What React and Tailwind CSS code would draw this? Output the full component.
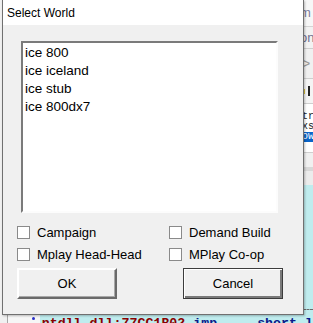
const worlds = ['ice 800', 'ice iceland', 'ice stub', 'ice 800dx7'];

const options = [
  ['Campaign', 'Demand Build'],
  ['Mplay Head-Head', 'MPlay Co-op'],
];

function Checkbox({ label }) {
  return (
    <label className="flex items-center gap-[7px] h-[13px]">
      <span className="w-[13px] h-[13px] bg-white border border-[#8a8a8a] shrink-0" />
      <span className="text-[13px] leading-none text-black">{label}</span>
    </label>
  );
}

function App() {
  return (
    <div className="relative w-[313px] h-[323px] overflow-hidden bg-[#f0f0f0] font-['Liberation_Sans',Arial,sans-serif]">
      {/* window behind the dialog */}
      <div className="flex flex-col h-full">
        <div className="flex flex-1">
          <div className="flex-1" />
          <div className="w-[10px] flex flex-col text-[13px] overflow-hidden whitespace-nowrap">
            <div className="h-[27px] bg-[#f7f7f7] border-b border-[#d4d4d4] flex items-center">
              <span className="-ml-[3px] text-[#7c7c9c]">m</span>
            </div>
            <div className="h-[22px] bg-[#f2f2f2] border-b border-[#cfcfcf] flex items-center">
              <span className="-ml-[3px] text-[#6f6f8f]">on</span>
            </div>
            <div className="h-[30px] bg-[#f0f0f0] border-b border-[#cfcfcf] flex items-center">
              <span className="-ml-[2px] text-[16px] text-[#9a9a9a]">&gt;</span>
            </div>
            <div className="h-[25px] bg-[#f4f4f4] border-b border-[#cfcfcf] flex items-center">
              <span className="w-[2px] h-[5px] bg-[#d8c040]" />
              <span className="ml-[3px] w-[2px] h-[10px] bg-[#222]" />
            </div>
            <div className="h-[49px] bg-white border-b border-[#cfcfcf] pt-[8px] font-['Liberation_Mono',monospace] text-[10px] leading-[10px] text-[#222]">
              <div className="-ml-[1px]">tr</div>
              <div className="-ml-[1px]">xs</div>
              <div className="bg-[#0a64c8] text-white -ml-[1px]">ow</div>
            </div>
            <div className="h-[18px] bg-[#f0f0f0] border-b-4 border-[#d8d8d8]" />
            <div className="h-[14px] bg-[#ececec]" />
            <div className="flex-1 bg-[#bfecee] flex flex-col justify-end pb-[4px]">
              <div className="border-t border-dashed border-[#6a6a6a]" />
            </div>
          </div>
        </div>
        <div className="h-[9px] flex">
          <div className="w-[9px] bg-[#f0f0f0] border-r border-[#a8a8a8]" />
          <div className="w-[34px] bg-[#f6f6f6] flex justify-end pr-[5px]">
            <span className="w-[3px] h-[3px] mt-[3px] rounded-full bg-[#2a30c8]" />
          </div>
          <div className="flex-1 bg-[#bfecee] pl-[2px] font-['Liberation_Mono',monospace] font-bold text-[13.3px] leading-[13px] pt-[3px] whitespace-pre">
            <span className="text-[#8a0000]">ntdll.dll:77CC1B02</span>
            <span className="text-[#0a1a8a]"> imp     short l</span>
          </div>
        </div>
      </div>

      {/* dialog */}
      <div className="absolute left-[2px] top-0 w-[302px] h-[315px] bg-[#f0f0f0] border-l border-r border-b border-[#707070] shadow-[1px_1px_2px_rgba(0,0,0,0.25)] flex flex-col">
        <div className="h-[25px] bg-white pl-[4px] flex items-center text-[12px] text-black">
          Select World
        </div>
        <div className="flex flex-col pl-[14px]">
          <ul className="mt-[16px] ml-[4px] w-[257px] h-[172px] bg-white border-2 border-t-[#7a7a7a] border-l-[#7a7a7a] border-r-[#fcfcfc] border-b-[#fcfcfc] pt-[1px] px-[2px] text-[13.5px] leading-[18px] text-black">
            {worlds.map((w) => (
              <li key={w}>{w}</li>
            ))}
          </ul>
          <div className="mt-[13px] flex flex-col gap-[9px]">
            {options.map(([a, b]) => (
              <div key={a} className="grid grid-cols-[152px_1fr]">
                <Checkbox label={a} />
                <Checkbox label={b} />
              </div>
            ))}
          </div>
          <div className="mt-[7px] flex gap-[66px]">
            <button className="w-[100px] h-[31px] bg-[#f0f0f0] border-2 border-t-white border-l-white border-r-[#6a6a6a] border-b-[#6a6a6a] shadow-[inset_-1px_-1px_#a8a8a8] text-[13px] text-black">
              OK
            </button>
            <button className="w-[100px] h-[31px] bg-[#f0f0f0] border border-[#3c3c3c] shadow-[inset_1px_1px_white,inset_-2px_-2px_#7a7a7a] text-[13px] text-black">
              Cancel
            </button>
          </div>
        </div>
      </div>
    </div>
  );
}

export default App;
